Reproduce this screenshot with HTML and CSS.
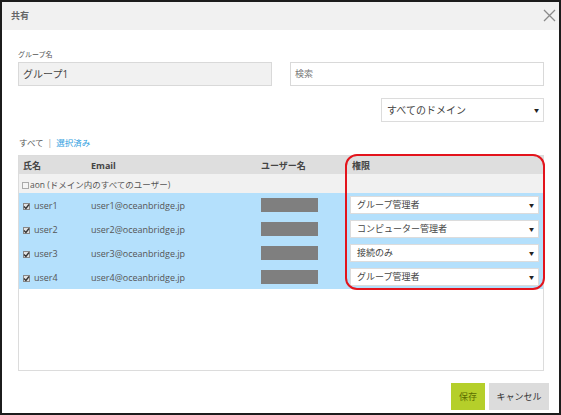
FILE: index.html
```html
<!DOCTYPE html>
<html lang="ja">
<head>
  <meta charset="UTF-8" />
  <title>共有</title>
  <link rel="stylesheet" href="styles.css">
</head>
<body>
  <div class="dialog">
    <div class="dialog-header">
      <span class="title">共有</span>
      <svg class="close" width="13" height="13" viewBox="0 0 13 13">
        <path d="M1 1 L12 12 M12 1 L1 12" stroke="#8a8a8a" stroke-width="1.3" fill="none"/>
      </svg>
    </div>

    <div class="dialog-body">
      <div class="fields">
        <div class="field">
          <label class="label">グループ名</label>
          <div class="input readonly">グループ1</div>
        </div>
        <div class="field">
          <div class="input placeholder">検索</div>
        </div>
      </div>

      <div class="domain-row">
        <div class="select domain">すべてのドメイン<span class="arrow">▼</span></div>
      </div>

      <div class="filter">
        <span class="all">すべて</span><span class="sep">|</span><a class="selected">選択済み</a>
      </div>

      <div class="table-box">
        <table class="users">
          <thead>
            <tr>
              <th class="c-name">氏名</th>
              <th class="c-mail">Email</th>
              <th class="c-user">ユーザー名</th>
              <th class="c-role">権限</th>
            </tr>
          </thead>
          <tbody>
            <tr class="everyone">
              <td colspan="3"><span class="check"></span>aon (ドメイン内のすべてのユーザー)</td>
              <td></td>
            </tr>
            <tr class="picked">
              <td><span class="check on"><svg width="7" height="7" viewBox="0 0 7 7"><path d="M1 3.6 L2.9 5.4 L6 1.5" stroke="#333" stroke-width="1.4" fill="none"/></svg></span>user1</td>
              <td>user1@oceanbridge.jp</td>
              <td><span class="masked"></span></td>
              <td class="role"><div class="select">グループ管理者<span class="arrow">▼</span></div></td>
            </tr>
            <tr class="picked">
              <td><span class="check on"><svg width="7" height="7" viewBox="0 0 7 7"><path d="M1 3.6 L2.9 5.4 L6 1.5" stroke="#333" stroke-width="1.4" fill="none"/></svg></span>user2</td>
              <td>user2@oceanbridge.jp</td>
              <td><span class="masked"></span></td>
              <td class="role"><div class="select">コンピューター管理者<span class="arrow">▼</span></div></td>
            </tr>
            <tr class="picked">
              <td><span class="check on"><svg width="7" height="7" viewBox="0 0 7 7"><path d="M1 3.6 L2.9 5.4 L6 1.5" stroke="#333" stroke-width="1.4" fill="none"/></svg></span>user3</td>
              <td>user3@oceanbridge.jp</td>
              <td><span class="masked"></span></td>
              <td class="role"><div class="select">接続のみ<span class="arrow">▼</span></div></td>
            </tr>
            <tr class="picked">
              <td><span class="check on"><svg width="7" height="7" viewBox="0 0 7 7"><path d="M1 3.6 L2.9 5.4 L6 1.5" stroke="#333" stroke-width="1.4" fill="none"/></svg></span>user4</td>
              <td>user4@oceanbridge.jp</td>
              <td><span class="masked"></span></td>
              <td class="role"><div class="select">グループ管理者<span class="arrow">▼</span></div></td>
            </tr>
          </tbody>
        </table>
      </div>

      <!-- red annotation around the 権限 column -->
      <div class="highlight"></div>
    </div>

    <div class="dialog-footer">
      <button class="btn save">保存</button>
      <button class="btn cancel">キャンセル</button>
    </div>
  </div>
</body>
</html>
```

FILE: styles.css
```css
* {
  box-sizing: border-box;
}

body {
  margin: 0;
  font-family: "Open Sans", "Noto Sans CJK JP", sans-serif;
  color: #444;
  background: #fff;
}

.dialog {
  width: 561px;
  height: 415px;
  border: 2px solid #1c1c1c;
  background: #fff;
  display: flex;
  flex-direction: column;
}

.dialog-header {
  height: 28px;
  background: #f1f1f1;
  display: flex;
  align-items: center;
  justify-content: space-between;
  padding: 0 3px 0 9px;
}

.title {
  font-size: 9px;
  font-weight: bold;
  color: #666;
  line-height: 12px;
}

.close {
  margin-top: -2px;
}

.dialog-body {
  position: relative;
  padding: 20px 15px 0 16px;
}

.fields {
  display: grid;
  grid-template-columns: 1fr 1fr;
  column-gap: 18px;
  align-items: end;
}

.label {
  display: block;
  font-size: 7px;
  line-height: 10px;
  color: #555;
  margin-bottom: 2px;
}

.input {
  height: 24px;
  border: 1px solid #d9d9d9;
  font-size: 10px;
  line-height: 22px;
  padding: 0 4px;
  color: #444;
}

.input.readonly {
  background: #f1f1f1;
}

.input.placeholder {
  font-size: 9px;
  color: #777;
}

.domain-row {
  display: flex;
  justify-content: flex-end;
  margin-top: 12px;
}

.select {
  position: relative;
  height: 18px;
  border: 1px solid #dcdcdc;
  background: #fff;
  font-size: 9px;
  line-height: 16px;
  padding: 0 14px 0 6px;
  color: #444;
  white-space: nowrap;
}

.select .arrow {
  position: absolute;
  right: 4px;
  top: 0;
  font-size: 5px;
  color: #222;
}

.select.domain {
  width: 163px;
  height: 24px;
  line-height: 22px;
  font-size: 10px;
  padding-left: 5px;
}

.filter {
  margin-top: 15px;
  font-size: 8.5px;
  line-height: 12px;
  padding-left: 1px;
}

.filter .all {
  color: #555;
}

.filter .sep {
  color: #999;
  margin: 0 4px;
}

.filter .selected {
  color: #2f9ee0;
}

.table-box {
  margin-top: 6px;
  height: 216px;
  border: 1px solid #dcdcdc;
}

.users {
  width: 100%;
  border-collapse: collapse;
  table-layout: fixed;
  font-size: 9px;
  color: #555;
}

.users th {
  background: #dedede;
  height: 18px;
  text-align: left;
  font-weight: bold;
  padding: 0 4px;
  color: #444;
}

.c-name { width: 68px; }
.c-mail { width: 170px; }
.c-user { width: 91px; }

.users td {
  padding: 0 4px;
  white-space: nowrap;
}

.everyone td {
  background: #f1f1f1;
  height: 19px;
  padding-left: 3px;
  font-size: 8.5px;
}

.picked td {
  background: #b4e0fc;
  height: 24px;
}

.users td.role {
  padding: 0 4px 0 2px;
}

.check {
  display: inline-block;
  width: 7px;
  height: 7px;
  border: 1px solid #aaa;
  background: #f4f4f4;
  vertical-align: -1px;
  margin-right: 1px;
}

.check.on {
  background: #e2e2e2;
  border-color: #888;
  margin-right: 4px;
  position: relative;
}

.check.on svg {
  position: absolute;
  left: -1px;
  top: -1px;
}

.masked {
  display: inline-block;
  width: 57px;
  height: 14px;
  background: #7f7f7f;
  vertical-align: middle;
}

.highlight {
  position: absolute;
  left: 343px;
  top: 124px;
  width: 200px;
  height: 136px;
  border: 2px solid #e3141c;
  border-radius: 12px;
  pointer-events: none;
}

.dialog-footer {
  display: flex;
  justify-content: flex-end;
  gap: 4px;
  padding: 12px 10px 0 0;
}

.btn {
  height: 27px;
  border: none;
  font-family: inherit;
  font-size: 9px;
  padding: 0;
}

.btn.save {
  width: 34px;
  background: #b5cf2a;
  color: #5b6e00;
}

.btn.cancel {
  width: 60px;
  background: #dcdcdc;
  color: #333;
}
```
